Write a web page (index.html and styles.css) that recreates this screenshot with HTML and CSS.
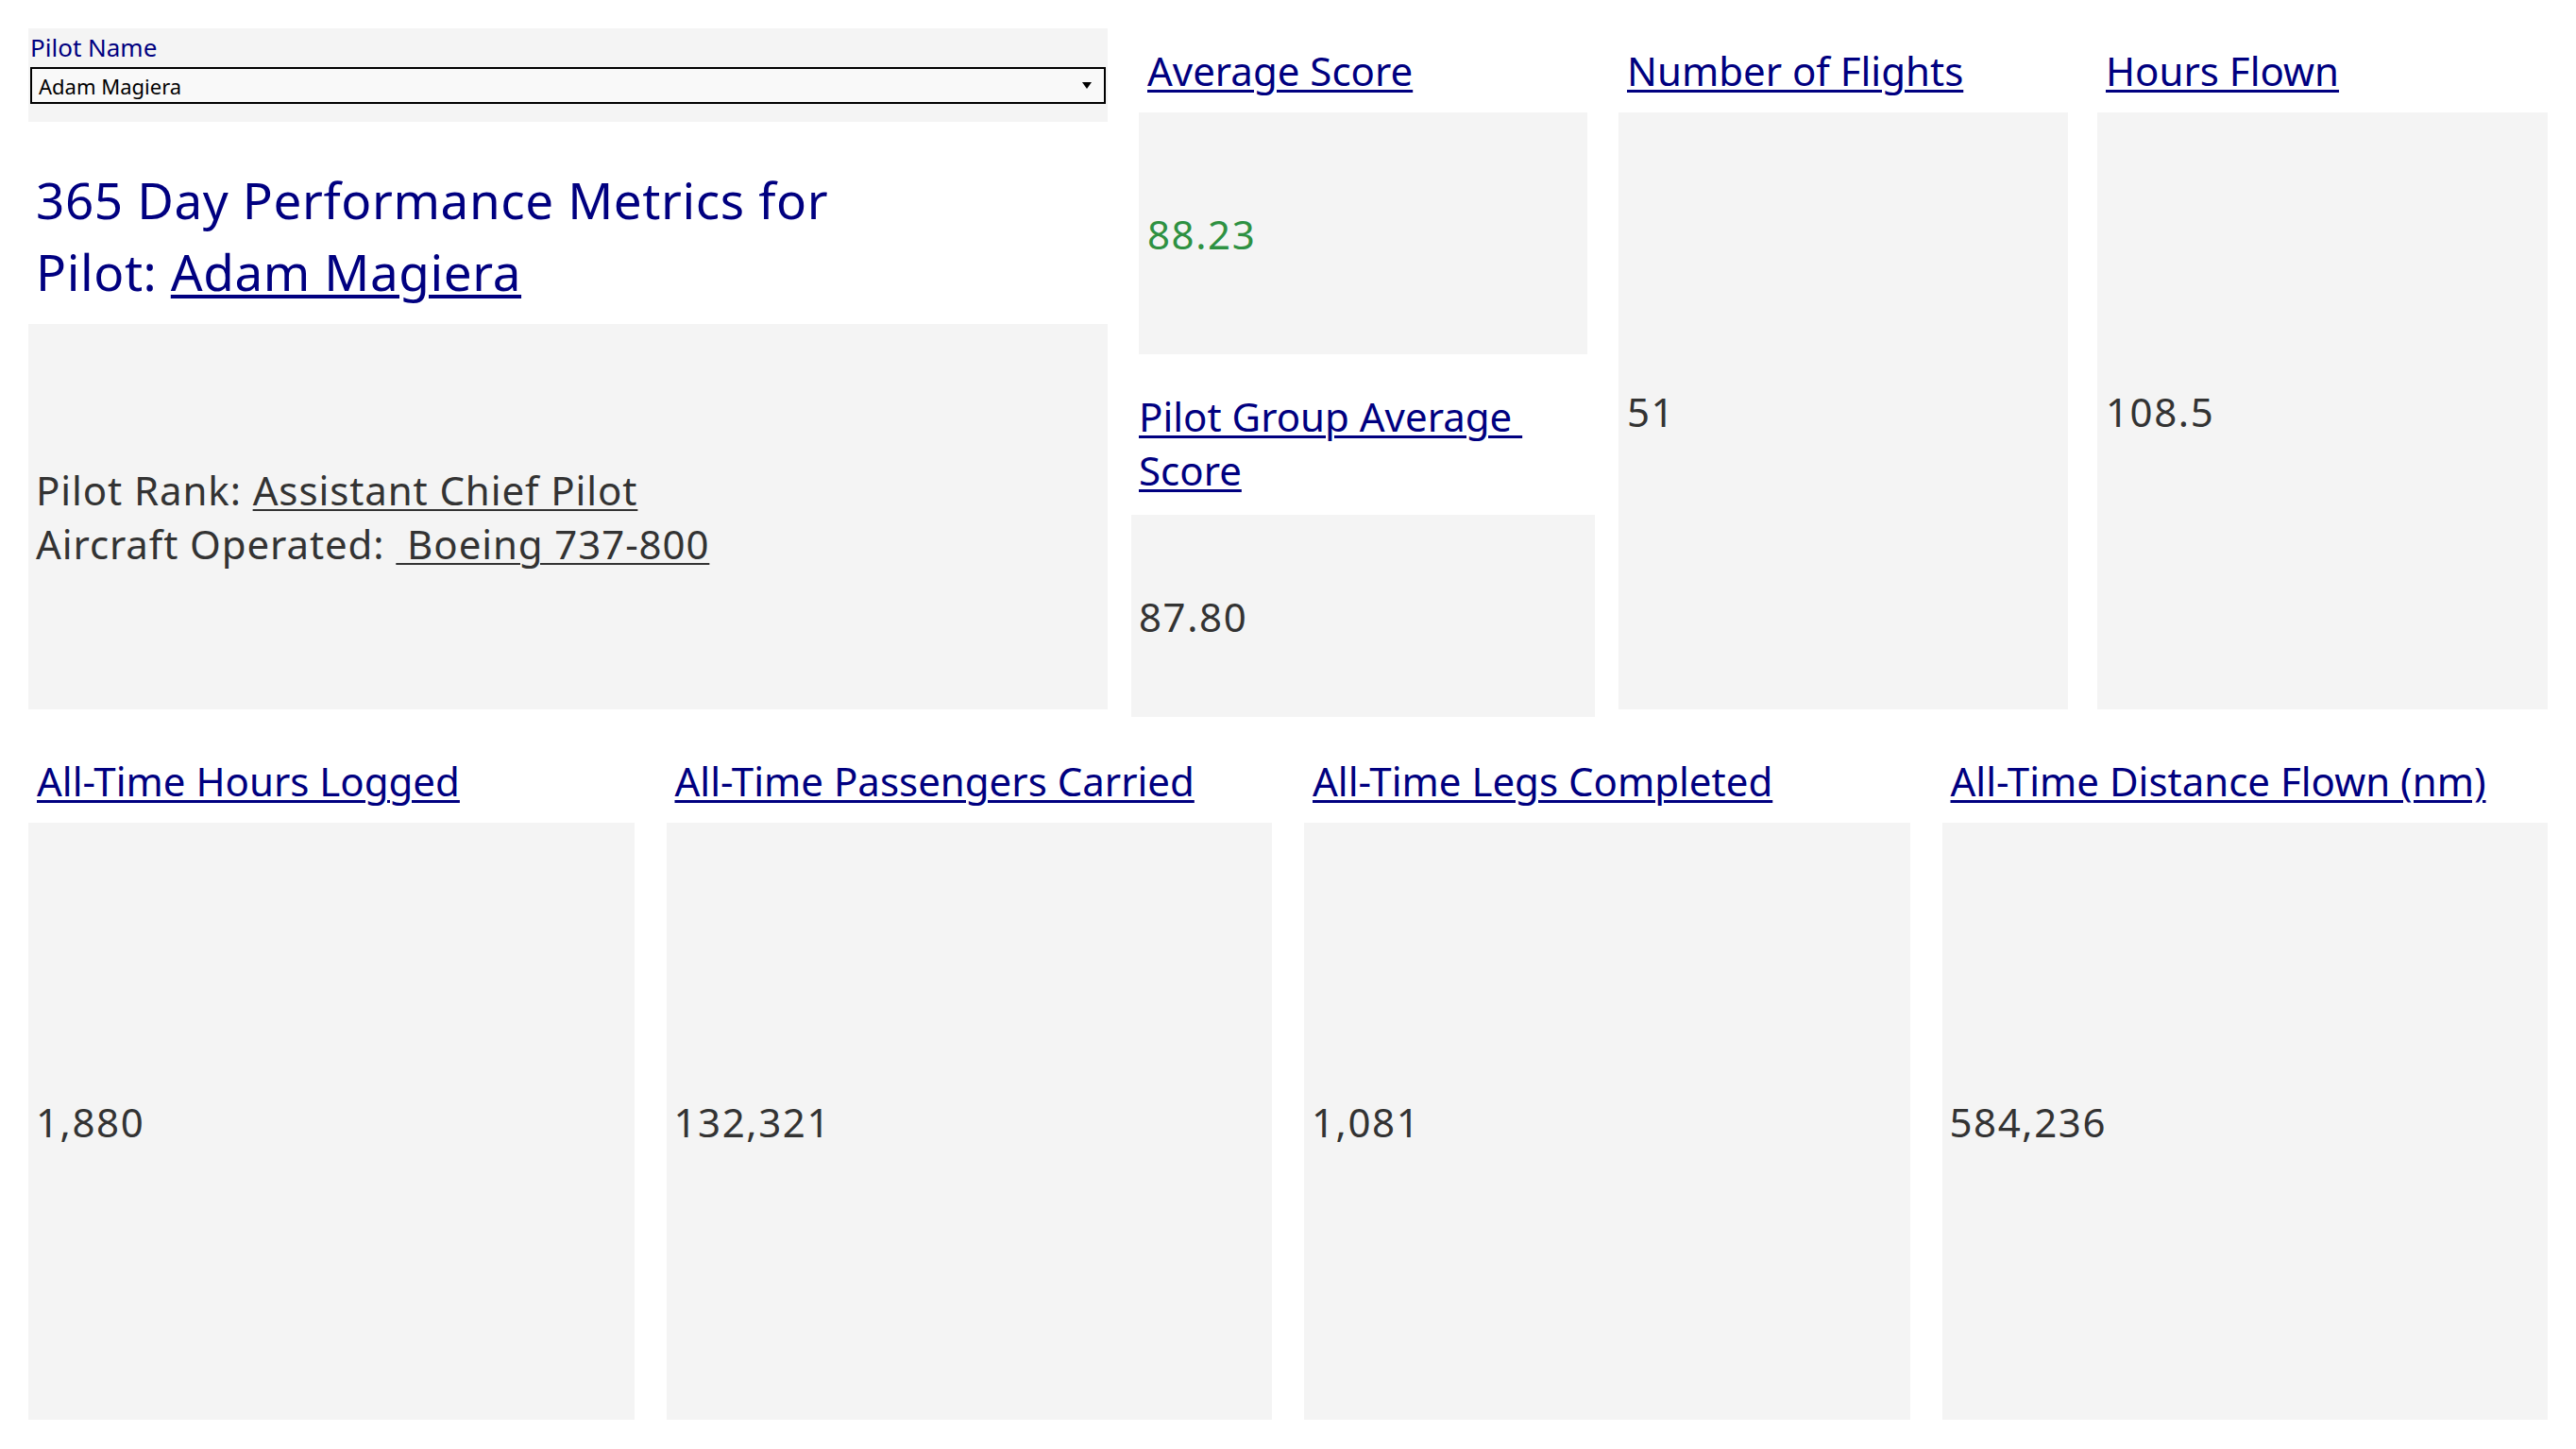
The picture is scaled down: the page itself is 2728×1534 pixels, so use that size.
FILE: index.html
```html
<!DOCTYPE html>
<html lang="en">
<head>
<meta charset="utf-8">
<title>Pilot Performance Metrics</title>
<link rel="stylesheet" href="styles.css">
</head>
<body>
<div class="dashboard">
  <div class="top">
    <div class="left-col">
      <div class="filter">
        <div class="filter-label">Pilot Name</div>
        <div class="select">
          <span class="select-value">Adam Magiera</span>
          <svg class="select-arrow" width="10" height="7" viewBox="0 0 10 7"><polygon points="0,0 10,0 5,7" fill="#000"/></svg>
        </div>
      </div>
      <h1 class="title">365 Day Performance Metrics for<br>Pilot: <a class="title-link">Adam Magiera</a></h1>
      <div class="info">
        <div class="info-line">Pilot Rank: <a class="info-link">Assistant Chief Pilot</a></div>
        <div class="info-line">Aircraft Operated: <a class="info-link">&nbsp;Boeing 737-800</a></div>
      </div>
    </div>
    <div class="col col-score">
      <div class="label label-top"><a class="label-link">Average Score</a></div>
      <div class="box box-avg"><span class="value value-green">88.23</span></div>
      <div class="label label-group"><a class="label-link">Pilot Group Average&nbsp;</a><br><a class="label-link">Score</a></div>
      <div class="box box-group"><span class="value">87.80</span></div>
    </div>
    <div class="col col-flights">
      <div class="label label-top"><a class="label-link">Number of Flights</a></div>
      <div class="box box-tall"><span class="value">51</span></div>
    </div>
    <div class="col col-hours">
      <div class="label label-top"><a class="label-link">Hours Flown</a></div>
      <div class="box box-tall"><span class="value">108.5</span></div>
    </div>
  </div>
  <div class="bottom">
    <div class="kpi">
      <div class="label label-bottom"><a class="label-link">All-Time Hours Logged</a></div>
      <div class="box box-bottom"><span class="value">1,880</span></div>
    </div>
    <div class="kpi">
      <div class="label label-bottom"><a class="label-link">All-Time Passengers Carried</a></div>
      <div class="box box-bottom"><span class="value">132,321</span></div>
    </div>
    <div class="kpi">
      <div class="label label-bottom"><a class="label-link">All-Time Legs Completed</a></div>
      <div class="box box-bottom"><span class="value">1,081</span></div>
    </div>
    <div class="kpi">
      <div class="label label-bottom"><a class="label-link">All-Time Distance Flown (nm)</a></div>
      <div class="box box-bottom"><span class="value">584,236</span></div>
    </div>
  </div>
</div>
</body>
</html>
```

FILE: styles.css
```css
* { box-sizing: border-box; }

html, body {
  margin: 0;
  padding: 0;
  background: #ffffff;
}

body {
  font-family: "Noto Sans", "Open Sans", sans-serif;
  color: #333333;
}

.dashboard {
  width: 2728px;
  height: 1534px;
  padding: 30px 30px 0 30px;
}

/* ---------- top band ---------- */
.top {
  display: flex;
  align-items: flex-start;
  height: 729px;
}

.left-col {
  width: 1143px;
  display: flex;
  flex-direction: column;
}

.filter {
  background: #f4f4f4;
  height: 99px;
  padding: 5px 2px 0 2px;
}

.filter-label {
  font-size: 26px;
  line-height: 30px;
  color: #000080;
}

.select {
  margin-top: 6px;
  height: 39px;
  border: 2px solid #000000;
  background: #f9f9f9;
  display: flex;
  align-items: center;
  justify-content: space-between;
  padding: 0 13px 0 7px;
}

.select-value {
  font-size: 22px;
  line-height: 26px;
  color: #000000;
}

.select-arrow { display: block; }

.title {
  margin: 45px 0 0 0;
  padding-left: 8px;
  font-size: 53px;
  letter-spacing: 0.6px;
  line-height: 76px;
  font-weight: normal;
  color: #000080;
  height: 169px;
}

.title-link {
  text-decoration: underline;
  text-decoration-thickness: 4px;
  text-underline-offset: 4px;
}

.info {
  background: #f4f4f4;
  height: 408px;
  padding-left: 8px;
  display: flex;
  flex-direction: column;
  justify-content: center;
  font-size: 42px;
  letter-spacing: 0.9px;
  line-height: 57px;
  color: #333333;
}

.info-link {
  text-decoration: underline;
  text-decoration-thickness: 2px;
  text-underline-offset: 4px;
}

/* ---------- metric columns ---------- */
.col {
  display: flex;
  flex-direction: column;
}

.col-score { width: 491px; margin-left: 25px; }
.col-flights { width: 476px; margin-left: 25px; }
.col-hours { width: 477px; margin-left: 31px; }

.label {
  font-size: 42px;
  line-height: 57px;
  color: #000080;
  white-space: nowrap;
}

.label-link {
  text-decoration: underline;
  text-decoration-thickness: 3px;
  text-underline-offset: 4px;
}

.label-top {
  height: 89px;
  padding: 16px 0 0 9px;
}

.col-score .label-top { padding-left: 17px; }

.label-group {
  height: 170px;
  padding: 37px 0 0 8px;
}

.box {
  background: #f4f4f4;
  display: flex;
  align-items: center;
  padding-left: 9px;
}

.value {
  font-size: 42px;
  letter-spacing: 1.6px;
  line-height: 57px;
  color: #333333;
}

.value-green { color: #2e9142; }

.box-avg {
  height: 256px;
  margin: 0 8px;
}

.box-group {
  height: 214px;
  padding-left: 8px;
}

.box-tall { height: 632px; }

/* ---------- bottom band ---------- */
.bottom {
  display: grid;
  grid-template-columns: repeat(4, 1fr);
  column-gap: 34px;
}

.kpi {
  display: flex;
  flex-direction: column;
}

.label-bottom {
  height: 112px;
  padding: 39px 0 0 9px;
}

.box-bottom {
  height: 632px;
  padding-left: 8px;
}
```
